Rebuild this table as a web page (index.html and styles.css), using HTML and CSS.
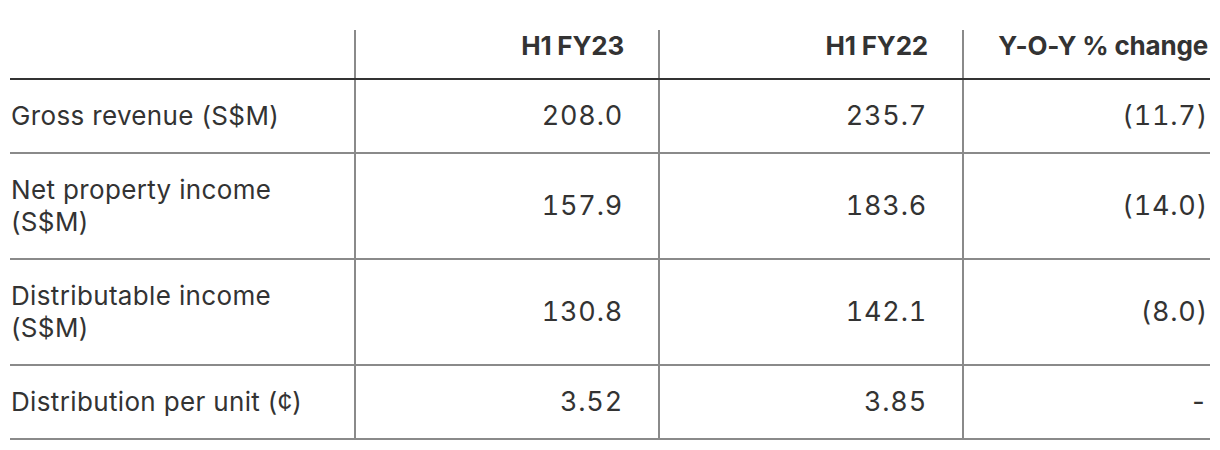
FILE: index.html
```html
<!DOCTYPE html>
<html lang="en">

<head>
    <meta charset="UTF-8">
    <meta name="viewport" content="width=device-width, initial-scale=1.0">
    <title>Financial Highlights</title>
    <link rel="stylesheet" href="styles.css">
</head>

<body>
    <table class="results">
        <colgroup>
            <col class="col-label">
            <col class="col-num">
            <col class="col-num">
            <col class="col-last">
        </colgroup>
        <thead>
            <tr>
                <th class="label"></th>
                <th class="num">H1 FY23</th>
                <th class="num">H1 FY22</th>
                <th class="num last">Y-O-Y % change</th>
            </tr>
        </thead>
        <tbody>
            <tr>
                <td class="label">Gross revenue (S$M)</td>
                <td class="num">208.0</td>
                <td class="num">235.7</td>
                <td class="num last">(11.7)</td>
            </tr>
            <tr>
                <td class="label">Net property income<br>(S$M)</td>
                <td class="num">157.9</td>
                <td class="num">183.6</td>
                <td class="num last">(14.0)</td>
            </tr>
            <tr>
                <td class="label">Distributable income<br>(S$M)</td>
                <td class="num">130.8</td>
                <td class="num">142.1</td>
                <td class="num last">(8.0)</td>
            </tr>
            <tr>
                <td class="label">Distribution per unit (&cent;)</td>
                <td class="num">3.52</td>
                <td class="num">3.85</td>
                <td class="num last">-</td>
            </tr>
        </tbody>
    </table>
</body>

</html>
```

FILE: styles.css
```css
* {
    margin: 0;
    padding: 0;
    box-sizing: border-box;
}

body {
    font-family: Inter, "Liberation Sans", Arial, sans-serif;
    color: #333;
    background: #fff;
    padding: 30px 10px 0;
}

.results {
    width: 1200px;
    border-collapse: collapse;
    table-layout: fixed;
}

.col-label {
    width: 345px;
}

.col-num {
    width: 304px;
}

.col-last {
    width: 247px;
}

/* header row */
.results th {
    font-size: 26px;
    font-weight: 700;
    line-height: 32px;
    letter-spacing: -0.2px;
    padding: 0 34px 16px 0;
    vertical-align: top;
    border-bottom: 2px solid #333;
}

.results td {
    font-size: 26px;
    font-weight: 400;
    line-height: 32px;
    padding: 20px 35px 20px 0;
    vertical-align: middle;
    border-bottom: 2px solid #8a8a8a;
}

.results .label {
    text-align: left;
    padding-left: 1px;
    letter-spacing: 0.35px;
}

.results .num {
    text-align: right;
    border-left: 2px solid #8a8a8a;
}

.results td.num {
    font-size: 27px;
    font-feature-settings: "tnum";
    letter-spacing: 0.8px;
}

.results .last {
    padding-right: 2px;
}
```
